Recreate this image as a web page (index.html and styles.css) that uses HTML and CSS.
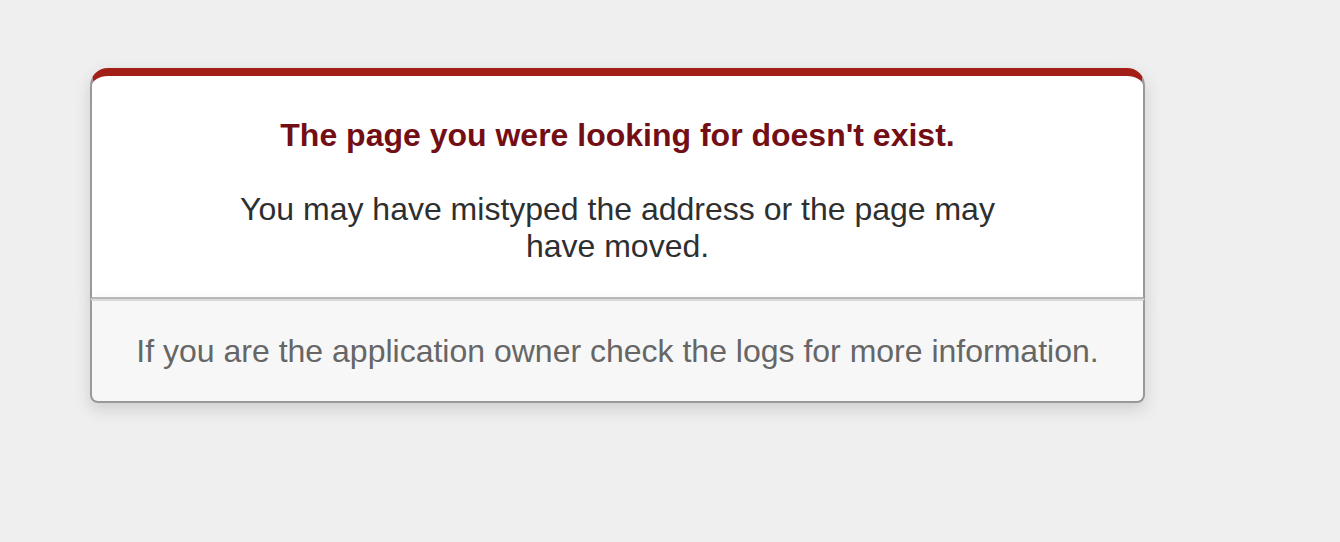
FILE: index.html
```html
<!DOCTYPE html>
<html>
<head>
<meta charset="utf-8">
<title>The page you were looking for doesn't exist (404)</title>
<link rel="stylesheet" href="styles.css">
</head>
<body class="error-page">
  <div class="dialog">
    <div class="dialog-main">
      <h1 class="dialog-title">The page you were looking for doesn't exist.</h1>
      <p class="dialog-text">You may have mistyped the address or the page may have moved.</p>
    </div>
    <p class="dialog-footer">If you are the application owner check the logs for more information.</p>
  </div>
</body>
</html>
```

FILE: styles.css
```css
html, body {
  margin: 0;
  padding: 0;
}

.error-page {
  background-color: #efefef;
  color: #2e2f30;
  text-align: center;
  font-family: "Liberation Sans", Arial, sans-serif;
  font-size: 32px;
}

.dialog {
  width: 1055px;
  margin: 68px 0 0 90px;
}

.dialog-main {
  border: 2px solid #ccc;
  border-right-color: #999;
  border-left-color: #999;
  border-bottom-color: #bbb;
  border-top: 8px solid #a11f17;
  border-top-left-radius: 18px;
  border-top-right-radius: 18px;
  background-color: #fff;
  padding: 14px 12% 0;
  box-shadow: 0 6px 16px rgba(50, 50, 50, 0.17);
}

.dialog-title {
  font-size: 32px;
  font-weight: bold;
  color: #730e15;
  line-height: 48px;
  margin: 21px 0 32px;
}

.dialog-text {
  margin: 0;
  padding-bottom: 32px;
  line-height: 37px;
}

.dialog-footer {
  margin: 0 0 32px;
  padding: 32px;
  line-height: 36px;
  background-color: #f7f7f7;
  border: 2px solid #999;
  border-top-color: #dadada;
  border-bottom-left-radius: 8px;
  border-bottom-right-radius: 8px;
  color: #666;
  box-shadow: 0 6px 16px rgba(50, 50, 50, 0.17);
}
```
